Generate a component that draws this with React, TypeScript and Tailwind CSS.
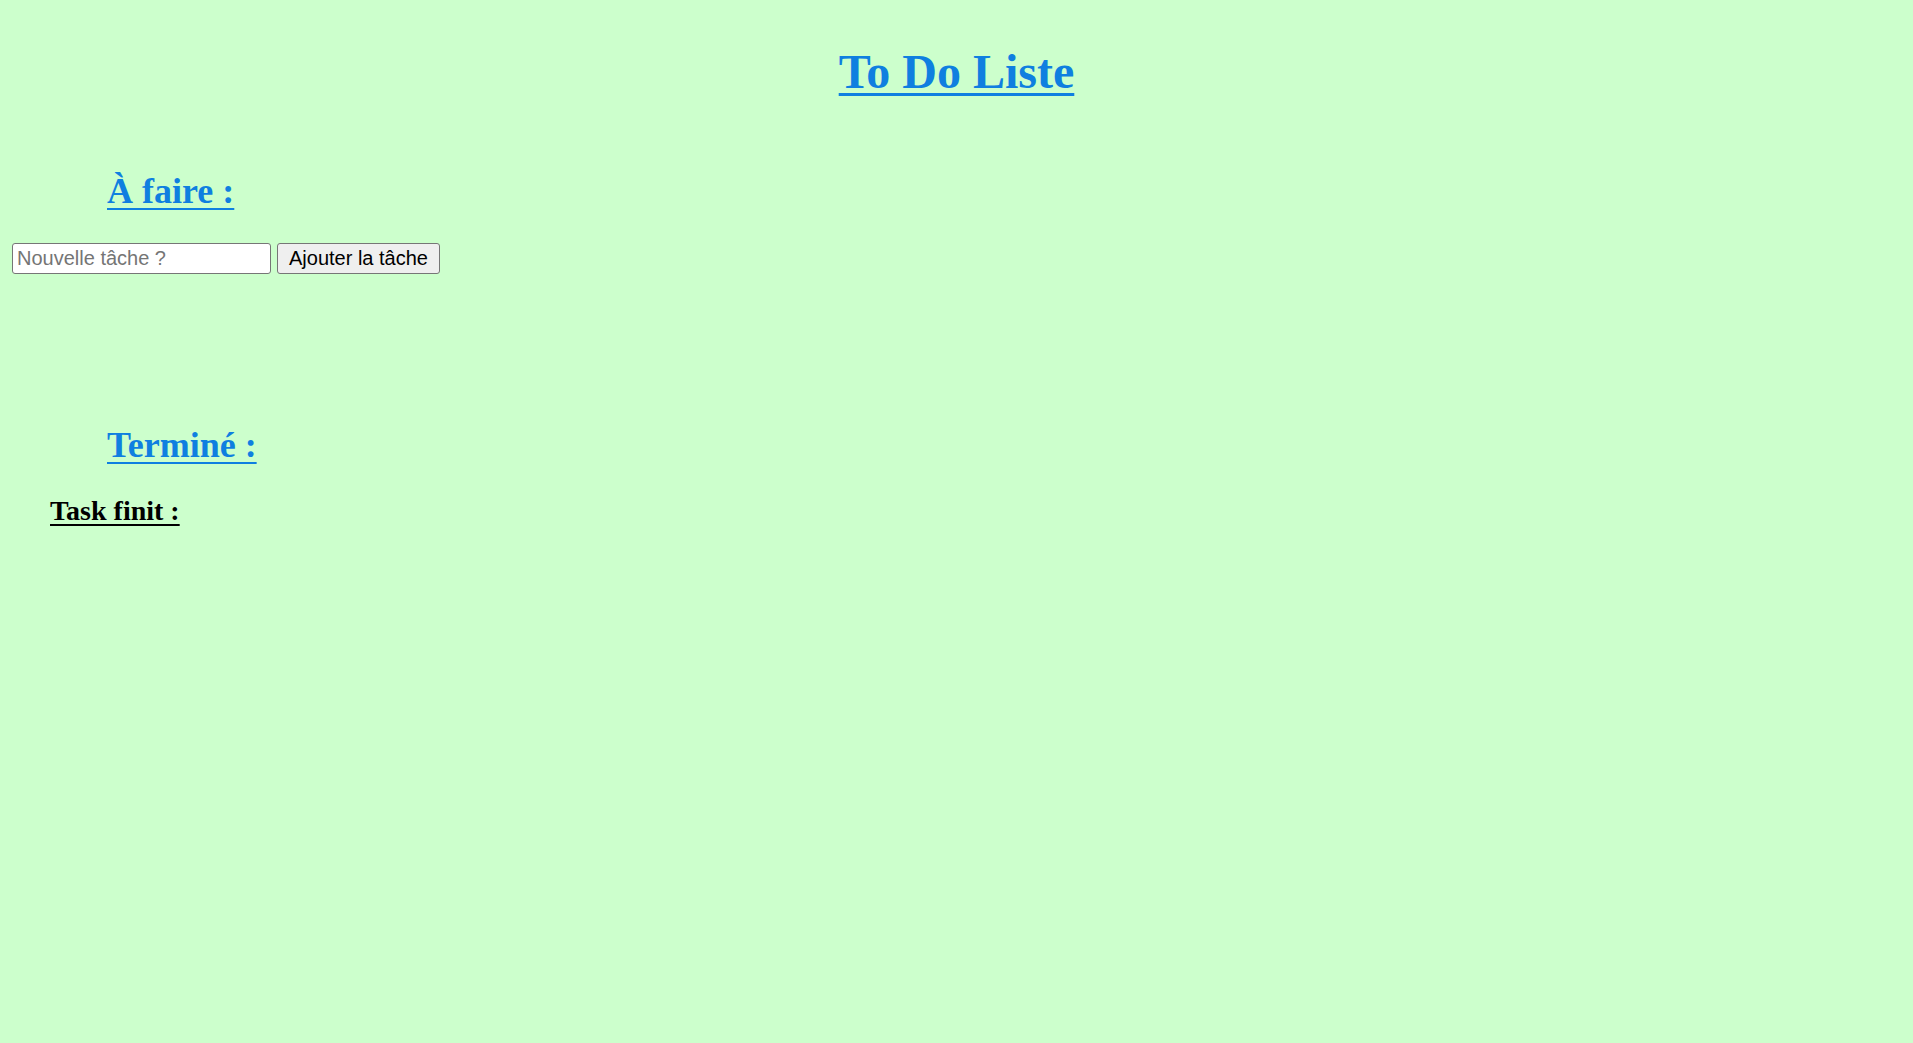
const App = () => {
  return (
    <div className="min-h-[1043px] w-full bg-[#ccffcc] font-['Liberation_Serif',serif]">
      <div className="flex flex-col px-[12px] pt-[48px]">
        <h1 className="text-center text-[48px] font-bold leading-[48px] text-[#0f7fe0] underline decoration-[3px] underline-offset-[5px]">
          To Do Liste
        </h1>

        <h2 className="ml-[95px] mt-[77px] text-[36px] font-bold leading-[36px] text-[#0f7fe0] underline decoration-2 underline-offset-[5px]">
          À faire :
        </h2>

        <form
          className="mt-[34px] flex items-center gap-[6px]"
          onSubmit={(e) => e.preventDefault()}
        >
          <input
            type="text"
            placeholder="Nouvelle tâche ?"
            className="h-[31px] w-[259px] rounded-[3px] border border-[#767676] bg-white px-[4px] font-['Liberation_Sans',Arial,sans-serif] text-[20px] text-black placeholder:text-[#757575] outline-none"
          />
          <button
            type="submit"
            className="h-[31px] rounded-[3px] border border-[#767676] bg-[#efefef] px-[11px] pb-[1px] font-['Liberation_Sans',Arial,sans-serif] text-[20px] leading-none text-black"
          >
            Ajouter la tâche
          </button>
        </form>

        <h2 className="ml-[95px] mt-[153px] text-[36px] font-bold leading-[36px] text-[#0f7fe0] underline decoration-2 underline-offset-[5px]">
          Terminé :
        </h2>

        <h3 className="ml-[38px] mt-[34px] text-[28px] font-bold leading-[28px] text-black underline decoration-2 underline-offset-[4px]">
          Task finit :
        </h3>
      </div>
    </div>
  )
}

export default App
